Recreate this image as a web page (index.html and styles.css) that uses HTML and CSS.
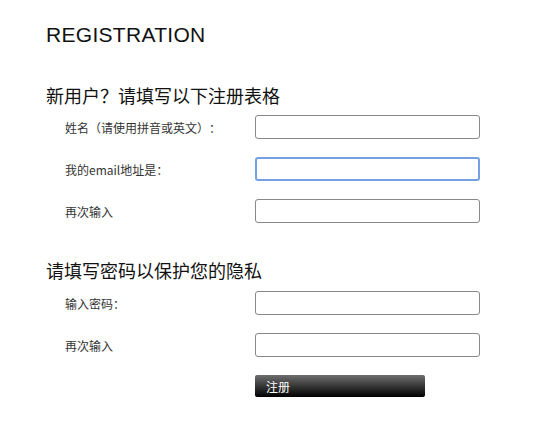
FILE: index.html
```html
<!DOCTYPE html>
<html lang="zh-CN">
<head>
    <meta charset="UTF-8">
    <title>REGISTRATION</title>
    <link rel="stylesheet" href="styles.css">
</head>
<body>
    <div class="reg-page">
        <h1 class="reg-title">REGISTRATION</h1>

        <form class="reg-form" onsubmit="return false;">
            <h2 class="reg-section-title">新用户？请填写以下注册表格</h2>
            <div class="reg-row">
                <label class="reg-label" for="name">姓名（请使用拼音或英文）：</label>
                <input class="reg-input" type="text" id="name">
            </div>
            <div class="reg-row">
                <label class="reg-label" for="email">我的email地址是：</label>
                <input class="reg-input is-focus" type="text" id="email">
            </div>
            <div class="reg-row">
                <label class="reg-label" for="email2">再次输入</label>
                <input class="reg-input" type="text" id="email2">
            </div>

            <h2 class="reg-section-title second">请填写密码以保护您的隐私</h2>
            <div class="reg-row">
                <label class="reg-label" for="pwd">输入密码：</label>
                <input class="reg-input" type="password" id="pwd">
            </div>
            <div class="reg-row">
                <label class="reg-label" for="pwd2">再次输入</label>
                <input class="reg-input" type="password" id="pwd2">
            </div>
            <div class="reg-row submit-row">
                <span class="reg-label"></span>
                <button class="reg-btn" type="submit">注册</button>
            </div>
        </form>
    </div>
</body>
</html>
```

FILE: styles.css
```css
* {
    margin: 0;
    padding: 0;
    box-sizing: border-box;
}

body {
    font-family: "Liberation Sans", "Noto Sans CJK SC", sans-serif;
    background: #fff;
    color: #222;
    text-spacing-trim: space-all;
}

.reg-page {
    padding: 22px 0 0 46px;
}

.reg-title {
    font-family: "Liberation Sans", sans-serif;
    font-size: 21px;
    font-weight: normal;
    letter-spacing: 0.3px;
    line-height: 26px;
    color: #111;
}

.reg-form {
    margin-top: 35px;
}

.reg-section-title {
    font-family: "Noto Sans CJK SC", sans-serif;
    font-size: 18px;
    font-weight: normal;
    line-height: 24px;
    color: #111;
    margin-bottom: 8px;
}

.reg-section-title.second {
    margin-top: 35px;
    margin-bottom: 9px;
}

.reg-row {
    display: flex;
    align-items: center;
    height: 24px;
    margin-bottom: 18px;
}

.submit-row {
    margin-top: 2px;
    height: 22px;
}

.reg-label {
    width: 209px;
    flex-shrink: 0;
    padding-left: 19px;
    font-family: "Noto Sans CJK SC", sans-serif;
    font-size: 12px;
    color: #333;
}

.reg-input {
    width: 225px;
    height: 24px;
    border: 1px solid #888;
    border-radius: 3px;
    background: #fff;
    outline: none;
}

.reg-input.is-focus {
    border: 2px solid #74a0e4;
}

.reg-btn {
    width: 170px;
    height: 22px;
    border: none;
    border-radius: 2px;
    background: linear-gradient(to bottom, #6e6e6e, #000);
    color: #fff;
    font-family: "Noto Sans CJK SC", sans-serif;
    font-size: 12px;
    text-align: left;
    padding-left: 11px;
    cursor: pointer;
}
```
